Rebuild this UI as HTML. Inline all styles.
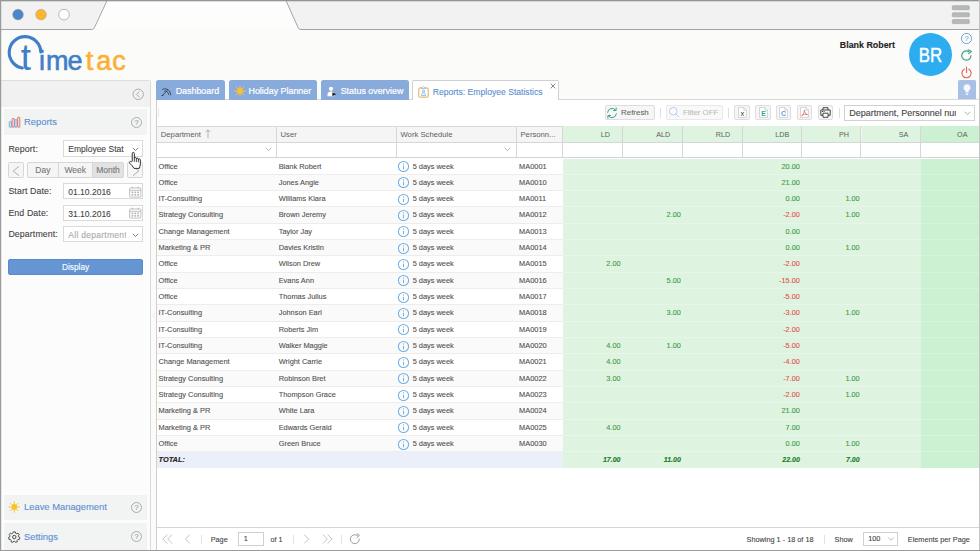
<!DOCTYPE html>
<html lang="en"><head><meta charset="utf-8"><title>TimeTac - Reports: Employee Statistics</title>
<style>
*{box-sizing:border-box;margin:0;padding:0}
html,body{width:980px;height:551px;overflow:hidden}
body{position:relative;background:#fbfbf9;font-family:"Liberation Sans",Arial,sans-serif;color:#444;font-size:7.4px;-webkit-text-stroke:.1px currentColor}
.abs{position:absolute}
svg{display:block;overflow:visible}
/* browser frame */
#chrome{position:absolute;left:0;top:0;width:980px;height:551px;pointer-events:none;z-index:50}
/* header */
#logo{position:absolute;left:0;top:30px;width:140px;height:50px}
#uname{position:absolute;right:85px;top:40px;font-size:8.9px;font-weight:bold;color:#222;white-space:nowrap}
#avatar{position:absolute;left:909px;top:33px;width:43px;height:43px;border-radius:50%;background:#2dadf0;color:#fff;font-size:19.3px;text-align:center;line-height:46px;-webkit-text-stroke:.45px #fff}
#avatar span{display:inline-block;transform:scaleX(.87)}
.hicon{position:absolute;left:960px;width:13px;height:13px}
#bulb{position:absolute;left:958px;top:80px;width:18px;height:19.5px;background:#a9c0e6;border-radius:1.5px 1.5px 0 0}
/* sidebar */
#side{position:absolute;left:1px;top:80px;width:150px;height:470px;background:#fafafa;border-top:1px solid #dcdcdc;border-right:1px solid #d6d6d6}
#sidehd{position:absolute;left:0;top:0;width:149px;height:26.5px;background:#f1f1f1}
.acc{position:absolute;left:3px;width:143px;background:#f2f3f3;color:#5b8ed0;font-size:9.4px}
.acc .t{position:absolute;left:20px;top:50%;transform:translateY(-50%);white-space:nowrap;line-height:12px}
.acc .q{position:absolute;left:127px;top:50%;margin-top:-5.5px;width:11px;height:11px}
.acc .ic{position:absolute;left:4px;top:50%;margin-top:-6px;width:13px;height:12px}
.lbl{position:absolute;left:8.4px;font-size:8.8px;letter-spacing:.1px;color:#444;white-space:nowrap;line-height:10px}
.fld{position:absolute;left:62.5px;width:79.5px;height:16px;background:#fff;border:1px solid #dadada;font-size:8.5px;color:#444;line-height:17.600px;padding-left:4px;white-space:nowrap;overflow:hidden}
.fld svg{position:absolute}
.sbtn{position:absolute;height:15.5px;background:#f5f5f5;border:1px solid #d6d6d6;border-radius:1.5px;font-size:8.3px;color:#777;text-align:center;line-height:14px}
#display{position:absolute;left:7.2px;top:178.7px;width:134.8px;height:15.6px;background:#6596d3;border-radius:2px;color:#fff;font-size:8.3px;text-align:center;line-height:15.4px;border:1px solid #5a8bc9}
/* tabs */
.tab{position:absolute;z-index:3;top:80px;height:19.700px;background:#89abdb;border-radius:2.5px 2.5px 0 0;color:#fff;font-size:8.9px;white-space:nowrap;line-height:23.8px;-webkit-text-stroke:.2px #fff}
.tab .tx{position:absolute;top:0;margin-left:-.5px}
.tab svg{position:absolute}
#tabact{position:absolute;z-index:5;left:411.700px;top:79.700px;width:146.900px;height:20.700px;background:#fff;border:1px solid #d0d0d0;border-bottom:none;border-radius:2px 2px 0 0;color:#5b8ed0;font-size:8.6px;line-height:21.5px;white-space:nowrap}
/* panel */
#panel{position:absolute;left:156px;top:99.400px;width:823px;height:450.600px;background:#fff;border-left:1px solid #cfcfcf;border-top:1px solid #d8d8d8}
#tb{position:absolute;left:157px;top:101px;width:822px;height:25.5px;background:#fff}
.tbtn{position:absolute;top:104.700px;height:15.8px;background:#f6f6f6;border:1px solid #dedede;border-radius:2px;font-size:7.9px;color:#666;line-height:14.600px;white-space:nowrap}
.tsep{position:absolute;top:108px;width:1px;height:9.500px;background:#e0e0e0}
/* grid header */
#ghd{position:absolute;left:157px;top:125.6px;width:822px;height:17.4px;background:#f5f5f5;border-top:1px solid #dadada;border-bottom:1px solid #d6d6d6}
.h{position:absolute;top:0;height:15.4px;border-right:1px solid #d6d6d6;font-size:7.7px;color:#606060;-webkit-text-stroke:0;line-height:16px;padding-left:3.800px;white-space:nowrap;overflow:hidden}
.h.g{background:#def4e0;text-align:right;padding:0 11.500px 0 0;top:-1px;height:16.400px;line-height:18px;font-size:7.200px}
.h.g2{background:#cbf0d2}
#gfl{position:absolute;left:157px;top:143px;width:822px;height:15px;background:#fff;border-bottom:1px solid #d4d4d4}
.f{position:absolute;top:0;height:13.5px;border-right:1px solid #d6d6d6}
/* body */
.gridbody{position:absolute;left:157px;top:158.5px;width:822px}
.row{position:relative;height:16.33px;width:822px;background:#fff;border-bottom:1px solid #ededed}
.row.alt{background:#fafafa}
.row.total{background:#ebeffa;font-weight:bold;font-style:italic;color:#222;height:15.700px;border-bottom:none}
.row.total .c{height:15.700px;border-bottom:none;line-height:16.600px}
.row.total .n{font-size:7px}
.c{position:absolute;top:0;height:16.33px;line-height:16.900px;padding-left:1.5px;white-space:nowrap;overflow:hidden;font-size:7.4px;color:#505050}
.dep{left:0;width:119.5px}.usr{left:119.5px;width:120px;padding-left:2.200px}.ws{left:239.5px;width:120px}.pn{left:359.5px;width:46.5px;padding-left:2.6px}
.n{background:#def4e0;text-align:right;padding:0 2.2px 0 0;color:#3f9a46;border-bottom:1px solid #e6f7e8;font-size:7.3px}
.ld{left:405.700px;width:60px}.ald{left:465px;width:61px}.rld{left:525px;width:61px}.ldb{left:585px;width:60px}.ph{left:644px;width:60.8px}.sa{left:704px;width:60px}.oa{left:763.6px;width:58.4px;background:#cbf0d2;border-bottom-color:#d6f4dc}
.n.neg{color:#e4504e}
.total .c{color:#222}
.total .n{color:#17791f}
.info{position:absolute;left:.8px;top:1.500px;width:13px;height:13px;fill:none;stroke:#6fb0e6;stroke-width:.95}
.info .d{fill:#6fb0e6;stroke:none}
.ws span{position:absolute;left:16.2px}
/* paging */
#pg{position:absolute;left:157px;top:527.4px;width:822px;height:22.5px;background:#fff;border-top:1px solid #d6d6d6;font-size:7.3px;color:#444}
#pg .tx{position:absolute;top:6.200px;line-height:10px;white-space:nowrap}
#pg svg{position:absolute;fill:none;stroke:#c4c4c4;stroke-width:1;stroke-linecap:round;stroke-linejoin:round}
.psep{position:absolute;top:6.500px;width:1px;height:9px;background:#e2e2e2}
.pin{position:absolute;top:3.900px;height:14.2px;background:#fff;border:1px solid #d0d0d0;font-size:7.3px;line-height:12.5px;padding-left:4.5px}
.seg{font-size:8.5px;color:#777;text-align:center;line-height:16.8px;height:15.5px}

</style></head>
<body>
<!-- browser frame -->
<svg id="chrome" width="980" height="551" viewBox="0 0 980 551">
  <rect x="0" y="0" width="980" height="29.5" fill="#f2f2f2"/>
  <defs><linearGradient id="tg" x1="0" y1="0" x2="0" y2="1"><stop offset="0" stop-color="#fefefe"/><stop offset=".7" stop-color="#fdfdfc"/><stop offset="1" stop-color="#fbfbf9"/></linearGradient></defs>
  <polygon points="92.5,29.5 106.5,0 286,0 299.5,29.5 299.5,34 92.5,34" fill="url(#tg)"/>
  <path d="M0 29.5H91.5Q93.5 29.5 94.3 27.8L106.8 1M286.2 1L298.2 27.8Q299 29.5 301 29.5H980" fill="none" stroke="#a3a3a3" stroke-width="1"/>
  <rect x="0" y="0" width="980" height="1.300" fill="#959595"/>
  <rect x="0" y="0" width="1.2" height="551" fill="#9b9b9b"/>
  <rect x="979" y="0" width="1" height="551" fill="#c4c4c4"/>
  <rect x="0" y="550" width="980" height="1" fill="#9b9b9b"/>
  <circle cx="18" cy="14.6" r="5.3" fill="#4b86c9" stroke="#8f9aa8" stroke-width=".6"/>
  <circle cx="41" cy="14.6" r="5.3" fill="#fbb52e" stroke="#b9a27a" stroke-width=".6"/>
  <circle cx="64" cy="14.6" r="5.3" fill="#fff" stroke="#a8a8a8" stroke-width=".8"/>
  <g fill="#b6b9bb" stroke="#9ea1a3" stroke-width=".6">
    <rect x="952.3" y="5.700" width="17" height="4" rx=".8"/>
    <rect x="952.3" y="12.800" width="17" height="4" rx=".8"/>
    <rect x="952.3" y="19.600" width="17" height="4" rx=".8"/>
  </g>
</svg>

<!-- logo -->
<svg id="logo" width="140" height="50" viewBox="0 30 140 50">
  <path d="M22.3 68A15.800 15.800 0 1 1 40.800 52" fill="none" stroke="#3f7fca" stroke-width="3.100" stroke-linecap="round"/>
  <text font-family="'Liberation Sans',Arial,sans-serif" font-size="27" y="69.6" stroke-width=".6" stroke-linejoin="round"><tspan fill="#3f7fca" font-size="37" x="20.800" y="70.300">t</tspan><tspan fill="#3f7fca" stroke="#3f7fca" x="38.9 46 67.600" y="69.600">ime</tspan><tspan fill="#fbb033" stroke="#fbb033" x="85.800 96.300 112.300">tac</tspan></text>
</svg>

<!-- user header -->
<div id="uname">Blank Robert</div>
<div id="avatar"><span>BR</span></div>
<svg class="hicon" style="top:31.5px" viewBox="0 0 13 13"><circle cx="6.5" cy="6.5" r="5.1" fill="none" stroke="#5f9ad6" stroke-width=".9"/><text x="6.5" y="9.3" font-size="7.6" text-anchor="middle" fill="#5f9ad6" font-family="'Liberation Sans',sans-serif">?</text></svg>
<svg class="hicon" style="top:48.5px" viewBox="0 0 13 13"><path d="M11 6.7A4.6 4.6 0 1 1 8.9 2.7" fill="none" stroke="#3d9f88" stroke-width="1.150" stroke-linecap="round"/><path d="M8.2 .8L11.4 2.5L8.6 4.6" fill="none" stroke="#3d9f88" stroke-width="1.150" stroke-linecap="round" stroke-linejoin="round"/></svg>
<svg class="hicon" style="top:66px" viewBox="0 0 13 13"><path d="M4.2 3.2A4.6 4.6 0 1 0 8.8 3.2" fill="none" stroke="#e2645a" stroke-width="1.150" stroke-linecap="round"/><path d="M6.5 1V6.4" stroke="#e2645a" stroke-width="1.150" stroke-linecap="round"/></svg>
<div id="bulb"><svg width="18" height="19" viewBox="0 0 18 19"><path d="M9 4.2a3.5 3.5 0 0 0-2.1 6.3c.5.4.7.9.7 1.5h2.8c0-.6.2-1.1.7-1.5A3.5 3.5 0 0 0 9 4.2z" fill="#f4f7fc"/><rect x="7.5" y="12.5" width="3" height="1.1" rx=".4" fill="#f4f7fc"/><rect x="7.8" y="14" width="2.4" height=".9" rx=".4" fill="#f4f7fc"/></svg></div>

<!-- sidebar -->
<div class="abs" style="left:1px;top:80px;width:150px;height:470px;background:#fcfcfc;border-top:1px solid #dddddd;border-right:1px solid #dadada;border-top-right-radius:2.500px"></div>
<div class="abs" style="left:1px;top:81px;width:149px;height:26.4px;background:#f1f1f1;border-top-right-radius:2px"></div>
<svg class="abs" style="left:132px;top:87.600px" width="12.5" height="12.5" viewBox="0 0 12.5 12.5"><circle cx="6.2" cy="6.3" r="5.2" fill="none" stroke="#9a9a9a" stroke-width=".8"/><path d="M7.3 3.6L4.6 6.3L7.3 9" fill="none" stroke="#9a9a9a" stroke-width=".8" stroke-linecap="round" stroke-linejoin="round"/></svg>

<div class="acc" style="left:4px;top:109.3px;width:142.5px;height:26px">
  <svg class="ic" viewBox="0 0 13 12"><g stroke-width=".8"><rect x="1.300" y="5.700" width="2.300" height="5.500" rx=".5" stroke="#5fa3e0" fill="#cfe4f7"/><rect x="4.050" y="2.500" width="2.300" height="8.700" rx=".5" stroke="#e3665b" fill="#f8d3cf"/><rect x="6.800" y="3.700" width="2.300" height="7.500" rx=".5" stroke="#5fa3e0" fill="#cfe4f7"/><rect x="9.550" y="1.200" width="2.300" height="10" rx=".5" stroke="#e3665b" fill="#f8d3cf"/></g></svg>
  <span class="t">Reports</span>
  <svg class="q" viewBox="0 0 11 11"><circle cx="5.5" cy="5.5" r="5" fill="none" stroke="#9a9a9a" stroke-width=".8"/><text x="5.5" y="8.2" font-size="7.4" text-anchor="middle" fill="#8e8e8e" font-family="'Liberation Sans',sans-serif">?</text></svg>
</div>

<div class="lbl" style="top:143.6px">Report:</div>
<div class="fld" style="left:63.3px;top:140.4px;width:79.7px;height:16.4px">Employee Stat<svg style="left:67.500px;top:5.700px" width="7" height="5" viewBox="0 0 7 5"><path d="M.9 .9L3.500 3.600L6.100 .9" fill="none" stroke="#6a6a6a" stroke-width=".85"/></svg></div>

<div class="sbtn" style="left:8.2px;top:162.4px;width:15.6px"><svg class="abs" style="left:3.2px;top:2.2px" width="8" height="10" viewBox="0 0 8 10"><path d="M7 .3L1.200 5L7 9.700" fill="none" stroke="#9a9a9a" stroke-width=".8"/></svg></div>
<div class="sbtn" style="left:27.3px;top:162.4px;width:96.4px;border-radius:2px"></div>
<div class="sbtn" style="left:92.2px;top:162.4px;width:31.5px;background:#e2e2e2;border-radius:0 2px 2px 0"></div>
<div class="abs" style="left:58.4px;top:163.4px;width:1px;height:13.5px;background:#d8d8d8"></div>
<div class="abs seg" style="left:27.3px;top:162.4px;width:31.1px">Day</div>
<div class="abs seg" style="left:58.4px;top:162.4px;width:33.8px">Week</div>
<div class="abs seg" style="left:92.2px;top:162.4px;width:31.5px">Month</div>
<div class="sbtn" style="left:127.3px;top:162.4px;width:15.6px"><svg class="abs" style="left:3.400px;top:2.2px" width="8" height="10" viewBox="0 0 8 10"><path d="M1 .3L6.800 5L1 9.700" fill="none" stroke="#9a9a9a" stroke-width=".8"/></svg></div>

<div class="lbl" style="top:186.4px">Start Date:</div>
<div class="fld" style="left:63.3px;top:183.2px;width:79.7px;height:16.3px">01.10.2016<svg class="cal" style="left:64.3px;top:1.500px" width="12.500" height="12" viewBox="0 0 12 11"><g fill="none" stroke="#a9a9a9" stroke-width=".7"><rect x=".6" y="1.6" width="10.8" height="8.8" rx=".8"/><path d="M.6 3.9H11.4M3.2 .4V2.2M8.8 .4V2.2"/></g><g fill="#b5b5b5"><rect x="2.4" y="5.1" width="1.7" height="1.5"/><rect x="5.15" y="5.1" width="1.7" height="1.5"/><rect x="7.9" y="5.1" width="1.7" height="1.5"/><rect x="2.4" y="7.5" width="1.7" height="1.5"/><rect x="5.15" y="7.5" width="1.7" height="1.5"/><rect x="7.9" y="7.5" width="1.7" height="1.5"/></g></svg></div>
<div class="lbl" style="top:207.8px">End Date:</div>
<div class="fld" style="left:63.3px;top:204.6px;width:79.7px;height:16.3px">31.10.2016<svg class="cal" style="left:64.3px;top:1.500px" width="12.500" height="12" viewBox="0 0 12 11"><g fill="none" stroke="#a9a9a9" stroke-width=".7"><rect x=".6" y="1.6" width="10.8" height="8.8" rx=".8"/><path d="M.6 3.9H11.4M3.2 .4V2.2M8.8 .4V2.2"/></g><g fill="#b5b5b5"><rect x="2.4" y="5.1" width="1.7" height="1.5"/><rect x="5.15" y="5.1" width="1.7" height="1.5"/><rect x="7.9" y="5.1" width="1.7" height="1.5"/><rect x="2.4" y="7.5" width="1.7" height="1.5"/><rect x="5.15" y="7.5" width="1.7" height="1.5"/><rect x="7.9" y="7.5" width="1.7" height="1.5"/></g></svg></div>
<div class="lbl" style="top:229.4px">Department:</div>
<div class="fld" style="left:63.3px;top:226.1px;width:79.7px;height:16.4px;color:#a8a8a8"><span style="display:inline-block;width:57.500px;overflow:hidden;letter-spacing:.28px">All department</span><svg style="left:67.500px;top:5.700px" width="7" height="5" viewBox="0 0 7 5"><path d="M.9 .9L3.500 3.600L6.100 .9" fill="none" stroke="#6a6a6a" stroke-width=".85"/></svg></div>
<div id="display" style="left:8.2px;top:258.600px;width:134.8px;height:16px">Display</div>

<div class="acc" style="left:4px;top:494.5px;width:142.5px;height:25.8px">
  <svg class="ic" viewBox="0 0 13 12"><circle cx="6.3" cy="6" r="2.9" fill="#fcc02a"/><g stroke="#fcc02a" stroke-width=".9" stroke-linecap="round"><path d="M9.50 6.00L11.60 6.00M8.56 8.26L10.05 9.75M6.30 9.20L6.30 11.30M4.04 8.26L2.55 9.75M3.10 6.00L1.00 6.00M4.04 3.74L2.55 2.25M6.30 2.80L6.30 0.70M8.56 3.74L10.05 2.25"/></g></svg>
  <span class="t">Leave Management</span>
  <svg class="q" viewBox="0 0 11 11"><circle cx="5.5" cy="5.5" r="5" fill="none" stroke="#9a9a9a" stroke-width=".8"/><text x="5.5" y="8.2" font-size="7.4" text-anchor="middle" fill="#8e8e8e" font-family="'Liberation Sans',sans-serif">?</text></svg>
</div>
<div class="acc" style="left:4px;top:523px;width:142.5px;height:27px">
  <svg class="ic" viewBox="0 0 13 12"><g fill="none" stroke="#3c3c3c" stroke-width=".9"><circle cx="6.3" cy="6" r="1.7"/><path d="M5.3 .9h2l.4 1.4 1 .5 1.3-.7 1.2 1.5-.8 1.2.2 1 1.3.7-.5 1.9-1.5.1-.7.8.1 1.5-1.8.6-.9-1.2H5.8l-.9 1.200-1.800-.6.1-1.500-.7-.8-1.500-.1L.5 6.500l1.300-.7.200-1-.8-1.200 1.200-1.500 1.300.7 1-.5z" stroke-linejoin="round"/></g></svg>
  <span class="t">Settings</span>
  <svg class="q" viewBox="0 0 11 11"><circle cx="5.5" cy="5.5" r="5" fill="none" stroke="#9a9a9a" stroke-width=".8"/><text x="5.500" y="8.2" font-size="7.4" text-anchor="middle" fill="#8e8e8e" font-family="'Liberation Sans',sans-serif">?</text></svg>
</div>
<!-- tabs -->
<div class="tab" style="left:156px;width:69px">
  <svg style="left:5px;top:5.5px" width="11" height="11" viewBox="0 0 11 11"><g fill="none" stroke="#2f3540" stroke-width=".8" stroke-linecap="round"><path d="M1.6 3.3A5.6 5.6 0 0 1 9.6 8.9"/><path d="M3.600 5.100A3.200 3.200 0 0 1 7.600 8.400"/><path d="M6.300 4.300L1.300 9.600"/></g><circle cx="1.500" cy="9.500" r=".8" fill="#2f3540"/></svg>
  <span class="tx" style="left:20.2px">Dashboard</span>
</div>
<div class="tab" style="left:229.2px;width:88px">
  <svg style="left:4.600px;top:5px" width="12" height="12" viewBox="0 0 12 12"><circle cx="6" cy="6" r="2.900" fill="#fcc22c"/><g stroke="#f6c445" stroke-width="1" stroke-linecap="round"><path d="M9.10 6.00L11.10 6.00M8.19 8.19L9.61 9.61M6.00 9.10L6.00 11.10M3.81 8.19L2.39 9.61M2.90 6.00L0.90 6.00M3.81 3.81L2.39 2.39M6.00 2.90L6.00 0.90M8.19 3.81L9.61 2.39"/></g></svg>
  <span class="tx" style="left:19.800px">Holiday Planner</span>
</div>
<div class="tab" style="left:321.200px;width:87.500px">
  <svg style="left:6px;top:5.500px" width="10" height="11" viewBox="0 0 10 11"><circle cx="4" cy="2.800" r="2.100" fill="#fff"/><path d="M.500 10.200V8.600C.500 6.600 2 5.600 4 5.600S7.500 6.600 7.500 8.600V10.200z" fill="#fff"/><path d="M5.400 6.300L9.200 8.300L5.400 10.300z" fill="#222"/></svg>
  <span class="tx" style="left:20px">Status overview</span>
</div>
<div id="tabact">
  <svg class="abs" style="left:5.500px;top:5.500px" width="11" height="12" viewBox="0 0 11 12"><rect x=".800" y="2" width="9.400" height="9.200" rx=".900" fill="#fff" stroke="#d9a648" stroke-width=".9"/><path d="M3.400 2.600V1.400h1.200L5.500.500l.900.900h1.200v1.200z" fill="#fff" stroke="#9aa4ad" stroke-width=".6"/><circle cx="5.500" cy="5.200" r="1.100" fill="none" stroke="#5fa3e0" stroke-width=".7"/><path d="M3.700 9.600V8.400c0-1 .8-1.500 1.800-1.500s1.800.5 1.800 1.500v1.200z" fill="none" stroke="#5fa3e0" stroke-width=".7"/></svg>
  <span class="abs" style="left:20px;top:1.800px">Reports: Employee Statistics</span>
  <svg class="abs" style="left:137.700px;top:1.900px" width="6" height="6" viewBox="0 0 6 6"><path d="M.600 .600L5.400 5.400M5.400 .600L.600 5.400" stroke="#555" stroke-width=".7"/></svg>
</div>

<!-- content panel -->
<svg class="abs" style="left:151.500px;top:311.500px" width="4" height="7" viewBox="0 0 4 7"><path d="M3.200 .700L.900 3.500L3.200 6.300" fill="none" stroke="#e4e4e4" stroke-width=".8"/></svg>
<div id="panel"></div>
<div class="abs" style="left:158.200px;top:107.500px;width:1px;height:9.500px;background:#e8e8e8"></div>

<!-- toolbar -->
<div class="tbtn" style="left:604.800px;width:50.200px">
  <svg class="abs" style="left:.5px;top:1.300px" width="12" height="12" viewBox="0 0 12 12"><g fill="none" stroke="#35a58c" stroke-width="1" stroke-linecap="round" stroke-linejoin="round"><path d="M1.600 5.300A4.500 4.500 0 0 1 9.700 3.200"/><path d="M10.100 .900V3.500H7.500"/><path d="M10.400 6.700A4.500 4.500 0 0 1 2.300 8.800"/><path d="M1.900 11.100V8.500H4.500"/></g></svg>
  <span class="abs" style="left:15.300px;top:0">Refresh</span>
</div>
<div class="tsep" style="left:660px"></div>
<div class="tbtn" style="left:666.300px;width:56.500px;color:#bcbcbc;background:#f9f9f9;border-color:#e9e9e9">
  <svg class="abs" style="left:.700px;top:.500px" width="12" height="12" viewBox="0 0 12 12"><circle cx="5.200" cy="5.200" r="3.800" fill="none" stroke="#a9cdee" stroke-width=".9"/><path d="M8 8L10.800 10.800" stroke="#a9cdee" stroke-width=".9" stroke-linecap="round"/></svg>
  <span class="abs" style="left:15.600px;top:0">Filter OFF</span>
</div>
<div class="tsep" style="left:728.300px"></div>
<div class="tbtn" style="left:734.200px;width:15.500px"><svg class="abs" style="left:2.600px;top:1.300px" width="9" height="11" viewBox="0 0 9 11"><path d="M.500 .500H5.800L8.500 3.200V10.500H.500z" fill="#fff" stroke="#c6c6c6" stroke-width=".7"/><path d="M5.800 .500V3.200H8.500" fill="none" stroke="#c6c6c6" stroke-width=".7"/><text x="4.400" y="9.300" font-size="7.400" text-anchor="middle" fill="#333" font-family="'Liberation Sans',sans-serif">x</text></svg></div>
<div class="tbtn" style="left:755px;width:15.500px"><svg class="abs" style="left:2.600px;top:1.300px" width="9" height="11" viewBox="0 0 9 11"><path d="M.500 .500H5.800L8.500 3.200V10.500H.500z" fill="#fff" stroke="#c6c6c6" stroke-width=".7"/><path d="M5.800 .500V3.200H8.500" fill="none" stroke="#c6c6c6" stroke-width=".7"/><text x="4.600" y="9.300" font-size="7" font-weight="bold" text-anchor="middle" fill="#3fa794" font-family="'Liberation Sans',sans-serif">E</text></svg></div>
<div class="tbtn" style="left:775.800px;width:15.500px"><svg class="abs" style="left:2.600px;top:1.300px" width="9" height="11" viewBox="0 0 9 11"><path d="M.500 .500H5.800L8.500 3.200V10.500H.500z" fill="#fff" stroke="#c6c6c6" stroke-width=".7"/><path d="M5.800 .500V3.200H8.500" fill="none" stroke="#c6c6c6" stroke-width=".7"/><text x="4.600" y="9.300" font-size="7" font-weight="bold" text-anchor="middle" fill="#5b9fe3" font-family="'Liberation Sans',sans-serif">C</text></svg></div>
<div class="tbtn" style="left:796.600px;width:15.500px"><svg class="abs" style="left:2.600px;top:1.300px" width="9" height="11" viewBox="0 0 9 11"><path d="M.500 .500H5.800L8.500 3.200V10.500H.500z" fill="#fff" stroke="#c6c6c6" stroke-width=".7"/><path d="M5.800 .500V3.200H8.500" fill="none" stroke="#c6c6c6" stroke-width=".7"/><path d="M4.300 3.600c.5 1.800 1.400 3.500 3 4.300M4.300 3.600c0 2-.9 4-2.300 5.300M2 8.200c1.700-.9 3.500-1.200 5.300-.8" fill="none" stroke="#e3584d" stroke-width=".7" stroke-linecap="round"/></svg></div>
<div class="tbtn" style="left:817.500px;width:15.800px"><svg class="abs" style="left:1.900px;top:1.600px" width="11" height="11" viewBox="0 0 11 11"><g fill="none" stroke="#333" stroke-width=".9" stroke-linejoin="round"><path d="M3 3V.700H8V3"/><path d="M3 8.300H.800V3H10.200V8.300H8"/><rect x="3" y="6.200" width="5" height="4.100" fill="#fff"/></g><rect x="2" y="4.100" width="1" height=".9" fill="#333"/><rect x="3.600" y="4.100" width="1" height=".9" fill="#333"/></svg></div>
<div class="tsep" style="left:838.500px"></div>
<div class="abs" style="left:844.300px;top:105.200px;width:130.700px;height:15.500px;background:#fff;border:1px solid #d2d2d2;font-size:9px;line-height:15.400px;padding-left:4px;color:#444;white-space:nowrap;overflow:hidden"><span style="display:inline-block;width:106.500px;overflow:hidden">Department, Personnel number</span><svg class="abs" style="left:118.500px;top:4.800px" width="7" height="5" viewBox="0 0 7 5"><path d="M.700 .800L3.500 3.600L6.300 .800" fill="none" stroke="#999" stroke-width=".8"/></svg></div>

<!-- grid header -->
<div id="ghd">
  <div class="h" style="left:0;width:119.700px">Department <svg style="position:absolute;left:47.800px;top:2.400px" width="6" height="10" viewBox="0 0 6 10"><path d="M3 .800V9.200M.700 3.100L3 .800L5.300 3.100" fill="none" stroke="#999" stroke-width=".7"/></svg></div>
  <div class="h" style="left:119.700px;width:120px">User</div>
  <div class="h" style="left:239.700px;width:120px">Work Schedule</div>
  <div class="h" style="left:359.700px;width:46.500px">Personn...</div>
  <div class="h g" style="left:406px;width:59.500px">LD</div>
  <div class="h g" style="left:465.500px;width:60.200px">ALD</div>
  <div class="h g" style="left:525.700px;width:60px">RLD</div>
  <div class="h g" style="left:585.700px;width:59px">LDB</div>
  <div class="h g" style="left:644.700px;width:59.800px">PH</div>
  <div class="h g" style="left:704.500px;width:59.300px">SA</div>
  <div class="h g g2" style="left:763.800px;width:58.200px;border-right:none">OA</div>
</div>
<div id="gfl">
  <div class="f" style="left:0;width:119.700px"><svg style="position:absolute;left:107.500px;top:4px" width="7" height="5" viewBox="0 0 7 5"><path d="M.700 .800L3.500 3.600L6.300 .800" fill="none" stroke="#999" stroke-width=".7"/></svg></div>
  <div class="f" style="left:119.700px;width:120px"></div>
  <div class="f" style="left:239.700px;width:120px"><svg style="position:absolute;left:107.500px;top:4px" width="7" height="5" viewBox="0 0 7 5"><path d="M.700 .800L3.500 3.600L6.300 .800" fill="none" stroke="#999" stroke-width=".7"/></svg></div>
  <div class="f" style="left:359.700px;width:46.500px"></div>
  <div class="f" style="left:406px;width:59.500px"></div>
  <div class="f" style="left:465.500px;width:60.200px"></div>
  <div class="f" style="left:525.700px;width:60px"></div>
  <div class="f" style="left:585.700px;width:59px"></div>
  <div class="f" style="left:644.700px;width:59.800px"></div>
  <div class="f" style="left:704.500px;width:59.300px"></div>
</div>
<div class="gridbody">
<div class="row"><div class="c dep">Office</div><div class="c usr">Blank Robert</div><div class="c ws"><svg class="info" viewBox="0 0 12 12"><circle cx="6" cy="6" r="4.7"/><path d="M6 5.3v3.2"/><circle class="d" cx="6" cy="3.6" r=".55"/></svg><span>5 days week</span></div><div class="c pn">MA0001</div><div class="c n ld"></div><div class="c n ald"></div><div class="c n rld"></div><div class="c n ldb">20.00</div><div class="c n ph"></div><div class="c n sa"></div><div class="c n oa"></div></div>
<div class="row alt"><div class="c dep">Office</div><div class="c usr">Jones Angie</div><div class="c ws"><svg class="info" viewBox="0 0 12 12"><circle cx="6" cy="6" r="4.7"/><path d="M6 5.3v3.2"/><circle class="d" cx="6" cy="3.6" r=".55"/></svg><span>5 days week</span></div><div class="c pn">MA0010</div><div class="c n ld"></div><div class="c n ald"></div><div class="c n rld"></div><div class="c n ldb">21.00</div><div class="c n ph"></div><div class="c n sa"></div><div class="c n oa"></div></div>
<div class="row"><div class="c dep">IT-Consulting</div><div class="c usr">Williams Kiara</div><div class="c ws"><svg class="info" viewBox="0 0 12 12"><circle cx="6" cy="6" r="4.7"/><path d="M6 5.3v3.2"/><circle class="d" cx="6" cy="3.6" r=".55"/></svg><span>5 days week</span></div><div class="c pn">MA0011</div><div class="c n ld"></div><div class="c n ald"></div><div class="c n rld"></div><div class="c n ldb">0.00</div><div class="c n ph">1.00</div><div class="c n sa"></div><div class="c n oa"></div></div>
<div class="row alt"><div class="c dep">Strategy Consulting</div><div class="c usr">Brown Jeremy</div><div class="c ws"><svg class="info" viewBox="0 0 12 12"><circle cx="6" cy="6" r="4.7"/><path d="M6 5.3v3.2"/><circle class="d" cx="6" cy="3.6" r=".55"/></svg><span>5 days week</span></div><div class="c pn">MA0012</div><div class="c n ld"></div><div class="c n ald">2.00</div><div class="c n rld"></div><div class="c n ldb neg">-2.00</div><div class="c n ph">1.00</div><div class="c n sa"></div><div class="c n oa"></div></div>
<div class="row"><div class="c dep">Change Management</div><div class="c usr">Taylor Jay</div><div class="c ws"><svg class="info" viewBox="0 0 12 12"><circle cx="6" cy="6" r="4.7"/><path d="M6 5.3v3.2"/><circle class="d" cx="6" cy="3.6" r=".55"/></svg><span>5 days week</span></div><div class="c pn">MA0013</div><div class="c n ld"></div><div class="c n ald"></div><div class="c n rld"></div><div class="c n ldb">0.00</div><div class="c n ph"></div><div class="c n sa"></div><div class="c n oa"></div></div>
<div class="row alt"><div class="c dep">Marketing &amp; PR</div><div class="c usr">Davies Kristin</div><div class="c ws"><svg class="info" viewBox="0 0 12 12"><circle cx="6" cy="6" r="4.7"/><path d="M6 5.3v3.2"/><circle class="d" cx="6" cy="3.6" r=".55"/></svg><span>5 days week</span></div><div class="c pn">MA0014</div><div class="c n ld"></div><div class="c n ald"></div><div class="c n rld"></div><div class="c n ldb">0.00</div><div class="c n ph">1.00</div><div class="c n sa"></div><div class="c n oa"></div></div>
<div class="row"><div class="c dep">Office</div><div class="c usr">Wilson Drew</div><div class="c ws"><svg class="info" viewBox="0 0 12 12"><circle cx="6" cy="6" r="4.7"/><path d="M6 5.3v3.2"/><circle class="d" cx="6" cy="3.6" r=".55"/></svg><span>5 days week</span></div><div class="c pn">MA0015</div><div class="c n ld">2.00</div><div class="c n ald"></div><div class="c n rld"></div><div class="c n ldb neg">-2.00</div><div class="c n ph"></div><div class="c n sa"></div><div class="c n oa"></div></div>
<div class="row alt"><div class="c dep">Office</div><div class="c usr">Evans Ann</div><div class="c ws"><svg class="info" viewBox="0 0 12 12"><circle cx="6" cy="6" r="4.7"/><path d="M6 5.3v3.2"/><circle class="d" cx="6" cy="3.6" r=".55"/></svg><span>5 days week</span></div><div class="c pn">MA0016</div><div class="c n ld"></div><div class="c n ald">5.00</div><div class="c n rld"></div><div class="c n ldb neg">-15.00</div><div class="c n ph"></div><div class="c n sa"></div><div class="c n oa"></div></div>
<div class="row"><div class="c dep">Office</div><div class="c usr">Thomas Julius</div><div class="c ws"><svg class="info" viewBox="0 0 12 12"><circle cx="6" cy="6" r="4.7"/><path d="M6 5.3v3.2"/><circle class="d" cx="6" cy="3.6" r=".55"/></svg><span>5 days week</span></div><div class="c pn">MA0017</div><div class="c n ld"></div><div class="c n ald"></div><div class="c n rld"></div><div class="c n ldb neg">-5.00</div><div class="c n ph"></div><div class="c n sa"></div><div class="c n oa"></div></div>
<div class="row alt"><div class="c dep">IT-Consulting</div><div class="c usr">Johnson Earl</div><div class="c ws"><svg class="info" viewBox="0 0 12 12"><circle cx="6" cy="6" r="4.7"/><path d="M6 5.3v3.2"/><circle class="d" cx="6" cy="3.6" r=".55"/></svg><span>5 days week</span></div><div class="c pn">MA0018</div><div class="c n ld"></div><div class="c n ald">3.00</div><div class="c n rld"></div><div class="c n ldb neg">-3.00</div><div class="c n ph">1.00</div><div class="c n sa"></div><div class="c n oa"></div></div>
<div class="row"><div class="c dep">IT-Consulting</div><div class="c usr">Roberts Jim</div><div class="c ws"><svg class="info" viewBox="0 0 12 12"><circle cx="6" cy="6" r="4.7"/><path d="M6 5.3v3.2"/><circle class="d" cx="6" cy="3.6" r=".55"/></svg><span>5 days week</span></div><div class="c pn">MA0019</div><div class="c n ld"></div><div class="c n ald"></div><div class="c n rld"></div><div class="c n ldb neg">-2.00</div><div class="c n ph"></div><div class="c n sa"></div><div class="c n oa"></div></div>
<div class="row alt"><div class="c dep">IT-Consulting</div><div class="c usr">Walker Maggie</div><div class="c ws"><svg class="info" viewBox="0 0 12 12"><circle cx="6" cy="6" r="4.7"/><path d="M6 5.3v3.2"/><circle class="d" cx="6" cy="3.6" r=".55"/></svg><span>5 days week</span></div><div class="c pn">MA0020</div><div class="c n ld">4.00</div><div class="c n ald">1.00</div><div class="c n rld"></div><div class="c n ldb neg">-5.00</div><div class="c n ph"></div><div class="c n sa"></div><div class="c n oa"></div></div>
<div class="row"><div class="c dep">Change Management</div><div class="c usr">Wright Carrie</div><div class="c ws"><svg class="info" viewBox="0 0 12 12"><circle cx="6" cy="6" r="4.7"/><path d="M6 5.3v3.2"/><circle class="d" cx="6" cy="3.6" r=".55"/></svg><span>5 days week</span></div><div class="c pn">MA0021</div><div class="c n ld">4.00</div><div class="c n ald"></div><div class="c n rld"></div><div class="c n ldb neg">-4.00</div><div class="c n ph"></div><div class="c n sa"></div><div class="c n oa"></div></div>
<div class="row alt"><div class="c dep">Strategy Consulting</div><div class="c usr">Robinson Bret</div><div class="c ws"><svg class="info" viewBox="0 0 12 12"><circle cx="6" cy="6" r="4.7"/><path d="M6 5.3v3.2"/><circle class="d" cx="6" cy="3.6" r=".55"/></svg><span>5 days week</span></div><div class="c pn">MA0022</div><div class="c n ld">3.00</div><div class="c n ald"></div><div class="c n rld"></div><div class="c n ldb neg">-7.00</div><div class="c n ph">1.00</div><div class="c n sa"></div><div class="c n oa"></div></div>
<div class="row"><div class="c dep">Strategy Consulting</div><div class="c usr">Thompson Grace</div><div class="c ws"><svg class="info" viewBox="0 0 12 12"><circle cx="6" cy="6" r="4.7"/><path d="M6 5.3v3.2"/><circle class="d" cx="6" cy="3.6" r=".55"/></svg><span>5 days week</span></div><div class="c pn">MA0023</div><div class="c n ld"></div><div class="c n ald"></div><div class="c n rld"></div><div class="c n ldb neg">-2.00</div><div class="c n ph">1.00</div><div class="c n sa"></div><div class="c n oa"></div></div>
<div class="row alt"><div class="c dep">Marketing &amp; PR</div><div class="c usr">White Lara</div><div class="c ws"><svg class="info" viewBox="0 0 12 12"><circle cx="6" cy="6" r="4.7"/><path d="M6 5.3v3.2"/><circle class="d" cx="6" cy="3.6" r=".55"/></svg><span>5 days week</span></div><div class="c pn">MA0024</div><div class="c n ld"></div><div class="c n ald"></div><div class="c n rld"></div><div class="c n ldb">21.00</div><div class="c n ph"></div><div class="c n sa"></div><div class="c n oa"></div></div>
<div class="row"><div class="c dep">Marketing &amp; PR</div><div class="c usr">Edwards Gerald</div><div class="c ws"><svg class="info" viewBox="0 0 12 12"><circle cx="6" cy="6" r="4.7"/><path d="M6 5.3v3.2"/><circle class="d" cx="6" cy="3.6" r=".55"/></svg><span>5 days week</span></div><div class="c pn">MA0025</div><div class="c n ld">4.00</div><div class="c n ald"></div><div class="c n rld"></div><div class="c n ldb">7.00</div><div class="c n ph"></div><div class="c n sa"></div><div class="c n oa"></div></div>
<div class="row alt"><div class="c dep">Office</div><div class="c usr">Green Bruce</div><div class="c ws"><svg class="info" viewBox="0 0 12 12"><circle cx="6" cy="6" r="4.7"/><path d="M6 5.3v3.2"/><circle class="d" cx="6" cy="3.6" r=".55"/></svg><span>5 days week</span></div><div class="c pn">MA0030</div><div class="c n ld"></div><div class="c n ald"></div><div class="c n rld"></div><div class="c n ldb">0.00</div><div class="c n ph">1.00</div><div class="c n sa"></div><div class="c n oa"></div></div>
<div class="row total"><div class="c dep">TOTAL:</div><div class="c usr"></div><div class="c ws"></div><div class="c pn"></div><div class="c n ld">17.00</div><div class="c n ald">11.00</div><div class="c n rld"></div><div class="c n ldb">22.00</div><div class="c n ph">7.00</div><div class="c n sa"></div><div class="c n oa"></div></div>
</div>
<!-- paging toolbar -->
<div id="pg">
  <svg style="left:4.500px;top:5.800px" width="11" height="10" viewBox="0 0 11 10"><path d="M5 .800L.900 5L5 9.200M9.800 .800L5.700 5L9.800 9.200"/></svg>
  <svg style="left:27px;top:5.800px" width="7" height="10" viewBox="0 0 7 10"><path d="M5.500 .800L1.400 5L5.500 9.200"/></svg>
  <div class="psep" style="left:43.500px"></div>
  <span class="tx" style="left:53.700px">Page</span>
  <div class="pin" style="left:81.300px;width:25.700px">1</div>
  <span class="tx" style="left:113.400px">of 1</span>
  <div class="psep" style="left:136.400px"></div>
  <svg style="left:145.500px;top:5.800px" width="7" height="10" viewBox="0 0 7 10"><path d="M1.500 .800L5.600 5L1.500 9.200"/></svg>
  <svg style="left:165px;top:5.800px" width="11" height="10" viewBox="0 0 11 10"><path d="M1.200 .800L5.300 5L1.200 9.200M6 .800L10.100 5L6 9.200"/></svg>
  <div class="psep" style="left:183.800px"></div>
  <svg style="left:192px;top:4.800px" width="12" height="12" viewBox="0 0 12 12"><path d="M10.300 6.200A4.500 4.500 0 1 1 8.300 2.400" style="stroke:#9c9c9c"/><path d="M8 .700L10.400 2.500L8 4.300" style="stroke:#9c9c9c"/></svg>
  <span class="tx" style="left:589.600px">Showing 1 - 18 of 18</span>
  <div class="psep" style="left:667.400px"></div>
  <span class="tx" style="left:677.600px">Show</span>
  <div class="pin" style="left:705.700px;width:35px">100<svg style="left:24.500px;top:4px" width="6" height="5" viewBox="0 0 6 5"><path d="M.600 .800L3 3.300L5.400 .800" style="stroke:#999;stroke-width:.7"/></svg></div>
  <span class="tx" style="left:750.800px">Elements per Page</span>
</div>
<!-- mouse cursor -->
<svg class="abs" style="left:128.100px;top:150.500px;z-index:60" width="15.300" height="18.800" viewBox="0 0 13 16"><path d="M3.600 8.600V2.100c0-1.300 1.800-1.300 1.800 0V6.300c0-1.100 1.700-1.100 1.700 0V6.900c0-1.100 1.700-1.100 1.700 0V7.500c0-1.100 1.700-1 1.700 .100V11c0 1.500-.6 2.500-.9 3.800H5.100C4.200 13.100 2.800 11.800 1.500 10.400C.600 9.400 1.900 8.300 2.900 9.300z" fill="#fff" stroke="#222" stroke-width=".8" stroke-linejoin="round"/><path d="M5.400 6.300V9.200M7.100 6.900V9.400M8.800 7.500V9.600" stroke="#222" stroke-width=".7"/></svg>
</body></html>
